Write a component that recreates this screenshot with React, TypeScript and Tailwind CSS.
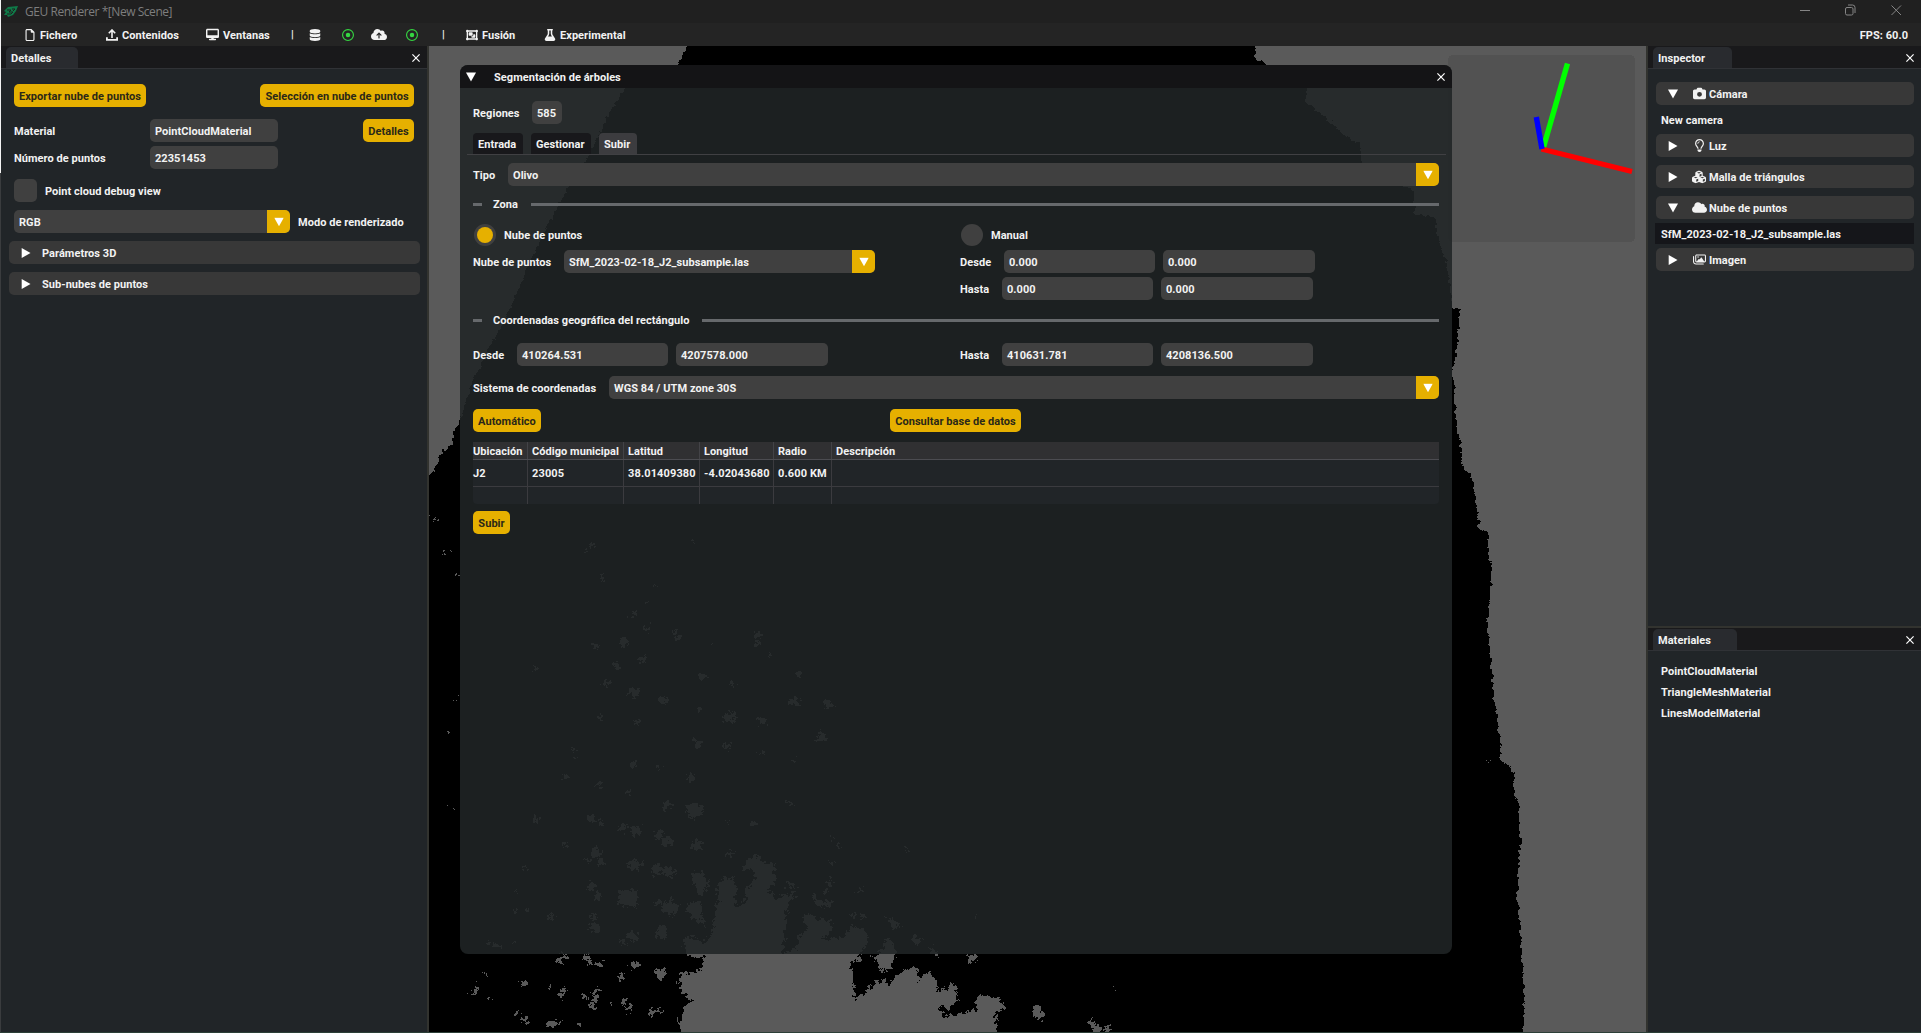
import type { ReactNode } from "react";
import {
  FaCamera,
  FaCloud,
  FaCloudArrowUp,
  FaCubes,
  FaDesktop,
  FaFlask,
  FaObjectGroup,
  FaRegCircleDot,
  FaRegFile,
  FaRegImages,
  FaRegLightbulb,
} from "react-icons/fa6";
import { FaDatabase } from "react-icons/fa";

function Triangle({ open = false, className = "" }: { open?: boolean; className?: string }) {
  return (
    <svg viewBox="0 0 10 10" className={`h-[10px] w-[10px] shrink-0 fill-white ${className}`}>
      <path d={open ? "M0 .5H10L5 9.5Z" : "M.7 0L9.5 5L.7 10Z"} />
    </svg>
  );
}

function Cross() {
  return (
    <svg viewBox="0 0 8 8" className="h-2 w-2 shrink-0 stroke-white" strokeWidth="1.2">
      <path d="M.4 .4L7.6 7.6M7.6 .4L.4 7.6" />
    </svg>
  );
}

function UploadIcon() {
  return (
    <svg viewBox="0 0 12 12" className="h-[12px] w-[12px] fill-none stroke-current">
      <path d="M6 9V1.2M2.8 4.2L6 1L9.2 4.2" strokeWidth="1.6" />
      <path d="M.9 8.2V10.8H11.1V8.2" strokeWidth="1.8" />
    </svg>
  );
}

function Label({ children, className = "" }: { children: ReactNode; className?: string }) {
  return <span className={`shrink-0 pt-[2px] ${className}`}>{children}</span>;
}

function Button({ children, className = "" }: { children: ReactNode; className?: string }) {
  return (
    <button
      className={`flex h-[23px] shrink-0 items-center justify-center rounded-[5px] bg-[#e6b000] pt-[2px] text-[#2b2818] ${className}`}
    >
      {children}
    </button>
  );
}

function Field({ children, className = "" }: { children: ReactNode; className?: string }) {
  return (
    <div className={`flex h-[23px] shrink-0 items-center rounded-[5px] bg-[#404040] pt-[2px] pl-[5px] ${className}`}>
      {children}
    </div>
  );
}

function Combo({ children, className = "" }: { children: ReactNode; className?: string }) {
  return (
    <div
      className={`flex h-[23px] items-center justify-between overflow-hidden rounded-[5px] bg-[#404040] pl-[5px] ${className}`}
    >
      <Label>{children}</Label>
      <span className="flex h-[23px] w-[23px] items-center justify-center bg-[#e6b000]">
        <Triangle open className="scale-95" />
      </span>
    </div>
  );
}

function PanelTab({ title, width }: { title: string; width: string }) {
  return (
    <div className="flex h-[23px] items-end justify-between border-b border-[#303236] bg-[#19191b] pr-[7.5px] pl-[5px]">
      <div className={`flex h-[21px] items-center rounded-t-[5px] bg-[#292b2f] pt-[2px] pl-[5px] ${width}`}>{title}</div>
      <div className="mb-[6px]">
        <Cross />
      </div>
    </div>
  );
}

function Header({ title, icon, open = false }: { title: string; icon?: ReactNode; open?: boolean }) {
  return (
    <div className="flex h-[23px] items-center rounded-[5px] bg-[#383838] pl-[12px]">
      <Triangle open={open} />
      {icon ? <span className="ml-[13px] flex w-[16px] justify-center text-[13px]">{icon}</span> : null}
      <Label className={icon ? "ml-[2px]" : "ml-[11px]"}>{title}</Label>
    </div>
  );
}

function Separator({ title }: { title: string }) {
  return (
    <div className="flex h-[15px] items-center">
      <div className="h-[3px] w-[9px] bg-[#66696c]" />
      <span className="mr-[13px] ml-[11px]">{title}</span>
      <div className="h-[3px] flex-1 bg-[#66696c]" />
    </div>
  );
}

const cloudOutline =
  "M691 40L677 65L623 90L605 122L587 160L567 190L553 215L533 255L520 285L505 320L488 350L472 382L461 418L453 434L453 445L446 448L440 455L437 466L425 481V1040H1524L1524 990L1522 955L1518 900L1518 870L1521 840L1519 833V802L1514 795V771L1500 760L1500 735L1494 700L1489 640L1487 625L1489 610L1492 565L1489 560L1488 533L1480 530L1472 474L1464 470L1455 410L1453 370L1458 340L1460 309L1452 307L1450 285L1446 260L1437 235L1436 218L1415 214L1414 190L1402 186L1382 176L1362 163L1360 142L1344 136L1326 118L1306 102L1307 88L1266 65L1255 58L1256 40Z";

const clearings = [
  "M912 938L930 965L968 978L965 1030L945 1045L965 1078L1000 1062L1030 1048L1010 1085L996 1120L995 1190L985 1242L1028 1225L1035 1190L1055 1165L1045 1130L1065 1118L1085 1138L1120 1140L1125 1170L1100 1200L1150 1195L1190 1155L1215 1165L1230 1200L1210 1235L1203 1242V1265L1180 1270L1185 1320L1190 1378L1225 1350L1240 1335L1270 1315L1285 1340L1310 1300L1340 1285L1365 1290L1370 1320L1390 1295L1418 1320L1420 1355L1445 1350L1460 1330L1475 1345V1390L1450 1408L1425 1395L1440 1430L1525 1412L1526 1380L1540 1366L1593 1375L1615 1405L1584 1418L1593 1500H706L700 1440L712 1405L732 1385L720 1368L700 1355L697 1305L735 1298L760 1290L768 1255L715 1245L708 1190L740 1190L770 1210L788 1185L795 1130L805 1090L802 1050L820 1010L850 1015L860 1050L850 1098L885 1090L880 1055L915 1010L900 990L878 990L880 970Z",
  "M728 992L760 995L778 1020V1050L750 1068L742 1030Z",
  "M712 1110L735 1082L765 1095L762 1120L775 1160L740 1135Z",
  "M525 1048L582 1050L578 1100L535 1098Z",
  "M648 1105L675 1072L695 1100L680 1132Z",
  "M718 805L740 785L772 810L735 842Z",
  "M1072 1065L1095 1082L1125 1085L1120 1104L1080 1100Z",
  "M1236 1250L1260 1240L1270 1212L1288 1195L1308 1240L1285 1290L1265 1297Z",
  "M1272 1130L1295 1140L1322 1160L1300 1165Z",
  "M1348 1182L1378 1198L1362 1215Z",
  "M1397 1215L1415 1225L1428 1252L1408 1245Z",
  "M1078 605L1094 566L1110 602Z",
  "M738 592L767 608L745 632Z",
];

/* x, y, radius of the small gaps between the points */
const gaps: [number, number, number][] = [
  [454, 14, 7], [436, 34, 4], [733, 2, 6], [485, 112, 8], [634, 140, 6], [608, 190, 5], [570, 222, 9], [610, 265, 9],
  [682, 275, 6], [692, 294, 9], [545, 305, 13], [465, 316, 9], [788, 314, 6], [917, 284, 9], [918, 308, 9],
  [597, 356, 12], [520, 375, 9], [292, 385, 5], [760, 408, 12], [495, 430, 11], [572, 457, 14], [652, 482, 12],
  [850, 434, 8], [1020, 485, 14], [1032, 404, 8], [1112, 492, 13], [757, 508, 9], [840, 530, 16], [930, 540, 10],
  [582, 547, 8], [480, 536, 7], [832, 620, 9], [402, 630, 7], [406, 653, 6], [572, 672, 11], [640, 680, 8],
  [378, 712, 8], [730, 713, 11], [474, 735, 8], [552, 758, 6], [664, 796, 13], [298, 840, 8], [450, 835, 10],
  [478, 848, 9], [543, 864, 12], [575, 872, 15], [640, 885, 13], [664, 905, 14], [745, 915, 15], [908, 852, 9],
  [832, 850, 6], [375, 915, 7], [465, 940, 14], [478, 965, 10], [444, 962, 7], [572, 975, 18], [634, 990, 16],
  [668, 995, 17], [268, 983, 6], [450, 1040, 12], [470, 1070, 11], [240, 1056, 4], [240, 1112, 6], [272, 1110, 6],
  [342, 1134, 8], [458, 1132, 8], [462, 1165, 16], [640, 1090, 9], [650, 1178, 18], [568, 1190, 15], [540, 1205, 10],
  [165, 1210, 6], [188, 1215, 7], [234, 1212, 4], [1008, 1035, 8], [1118, 1030, 9], [1110, 1055, 7], [1125, 893, 6],
  [1143, 916, 6], [1126, 967, 6], [1188, 1125, 6], [1214, 1128, 7], [1518, 1255, 13], [1020, 662, 6], [950, 342, 6],
  [925, 637, 6], [1008, 790, 7], [375, 1250, 9], [362, 1262, 8], [440, 1252, 9], [446, 1268, 7], [472, 1275, 9],
  [572, 1275, 12], [540, 1312, 9], [645, 1302, 16], [155, 1305, 5], [130, 1340, 6], [124, 1358, 8], [264, 1330, 8],
  [376, 1350, 9], [366, 1366, 8], [334, 1345, 6], [432, 1370, 7], [466, 1352, 9], [464, 1376, 9], [454, 1398, 9],
  [508, 1388, 6], [545, 1385, 8], [556, 1405, 8], [622, 1415, 10], [642, 1412, 9], [264, 1440, 9], [340, 1452, 10],
  [364, 1448, 6], [245, 1418, 5], [165, 1375, 5], [420, 1458, 5], [40, 40, 4], [56, 32, 3], [54, 580, 4], [82, 464, 4],
  [64, 482, 3], [60, 810, 3], [80, 107, 3], [1698, 1412, 13], [1708, 1428, 11], [1856, 1450, 9], [1868, 1468, 11],
  [1899, 1466, 9], [1915, 1340, 3], [2965, 662, 3], [840, 940, 8], [1335, 930, 5], [12, -60, 4], [-5, -70, 4],
  [1530, 1130, 4], [1205, 1050, 7],
];

function Scene() {
  return (
    <svg viewBox="429 46 1217 986" className="block h-full w-full bg-[#5a5a5a]" shapeRendering="crispEdges">
      <defs>
        <filter id="edge" x="429" y="46" width="1217" height="987" filterUnits="userSpaceOnUse" colorInterpolationFilters="sRGB">
          <feTurbulence type="fractalNoise" baseFrequency="0.2" numOctaves="3" seed="7" />
          <feDisplacementMap in="SourceGraphic" scale="6" xChannelSelector="R" yChannelSelector="G" />
        </filter>
        <filter id="rough" x="429" y="46" width="1217" height="987" filterUnits="userSpaceOnUse" colorInterpolationFilters="sRGB">
          <feTurbulence type="fractalNoise" baseFrequency="0.24" numOctaves="3" seed="4" />
          <feDisplacementMap in="SourceGraphic" scale="12" xChannelSelector="R" yChannelSelector="G" />
        </filter>
      </defs>
      <path d={cloudOutline} fill="#000" filter="url(#edge)" />
      <g filter="url(#rough)">
        <g transform="translate(430 540) scale(.3571 .3333)" fill="#5a5a5a">
          {clearings.map((d) => (
            <path key={d} d={d} />
          ))}
          {gaps.map(([x, y, r]) => (
            <circle key={`${x}-${y}`} cx={x} cy={y} r={r} />
          ))}
        </g>
      </g>
      <rect x="1448" y="55" width="187" height="187" rx="5" fill="#525252" />
      <g strokeWidth="5.4" shapeRendering="auto">
        <path d="M1543 149L1567.5 63.5" stroke="#00ff00" />
        <path d="M1541.5 149L1632 171.5" stroke="#ff0000" />
        <path d="M1542 149L1536.3 117" stroke="#0000ff" />
      </g>
    </svg>
  );
}

const columns = "grid grid-cols-[55px_96px_76px_74px_58px_1fr]";

function SegmentationDialog() {
  return (
    <div className="absolute top-[65px] left-[460px] flex h-[889px] w-[992px] flex-col overflow-hidden rounded-[8px] bg-[#202526]/87">
      <div className="flex h-[23px] shrink-0 items-center bg-[#141416] pr-[7.5px] pl-[6px]">
        <Triangle open />
        <Label className="ml-[18px] flex-1">Segmentación de árboles</Label>
        <Cross />
      </div>
      <div className="flex flex-col pr-[13px] pl-[13px]">
        <div className="mt-[13px] flex items-center">
          <Label className="w-[59px]">Regiones</Label>
          <Field className="w-[30px]">585</Field>
        </div>
        <div className="-mr-[7px] -ml-[6px] mt-[9px] flex h-[22px] gap-[8px] border-b border-[#404043] pl-[6px]">
          <div className="flex w-[50px] items-center rounded-t-[4px] bg-[#18181b] pt-[2px] pl-[5px]">Entrada</div>
          <div className="flex w-[60px] items-center rounded-t-[4px] bg-[#18181b] pt-[2px] pl-[5px]">Gestionar</div>
          <div className="flex w-[38px] items-center rounded-t-[4px] bg-[#3c3c3f] pt-[2px] pl-[5px]">Subir</div>
        </div>
        <div className="mt-[8px] flex items-center">
          <Label className="w-[35px]">Tipo</Label>
          <Combo className="flex-1">Olivo</Combo>
        </div>
        <div className="mt-[11px]">
          <Separator title="Zona" />
        </div>
        <div className="mt-[10px] flex h-[26px] items-center">
          <div className="flex w-[487px] items-center">
            <span className="ml-px flex h-[22px] w-[22px] items-center justify-center rounded-full bg-[#404040]">
              <span className="h-4 w-4 rounded-full bg-[#e6b000]" />
            </span>
            <span className="ml-[8px]">Nube de puntos</span>
          </div>
          <span className="ml-px h-[22px] w-[22px] rounded-full bg-[#404040]" />
          <span className="ml-[8px]">Manual</span>
        </div>
        <div className="mt-[2px] flex items-center">
          <Label className="w-[91px]">Nube de puntos</Label>
          <Combo className="w-[311px]">SfM_2023-02-18_J2_subsample.las</Combo>
          <Label className="ml-[85px] w-[44px]">Desde</Label>
          <Field className="mr-[8px] w-[151px]">0.000</Field>
          <Field className="w-[152px]">0.000</Field>
        </div>
        <div className="mt-[4px] flex items-center pl-[487px]">
          <Label className="w-[42px]">Hasta</Label>
          <Field className="mr-[8px] w-[151px]">0.000</Field>
          <Field className="w-[152px]">0.000</Field>
        </div>
        <div className="mt-[13px]">
          <Separator title="Coordenadas geográfica del rectángulo" />
        </div>
        <div className="mt-[15px] flex items-center">
          <Label className="w-[44px]">Desde</Label>
          <Field className="mr-[8px] w-[151px]">410264.531</Field>
          <Field className="w-[152px]">4207578.000</Field>
          <Label className="ml-[132px] w-[42px]">Hasta</Label>
          <Field className="mr-[8px] w-[151px]">410631.781</Field>
          <Field className="w-[152px]">4208136.500</Field>
        </div>
        <div className="mt-[10px] flex items-center">
          <Label className="w-[136px]">Sistema de coordenadas</Label>
          <Combo className="flex-1">WGS 84 / UTM zone 30S</Combo>
        </div>
        <div className="mt-[10px] flex items-center">
          <Button className="w-[68px]">Automático</Button>
          <Button className="ml-[349px] w-[131px]">Consultar base de datos</Button>
        </div>
        <div className="mt-[10px] h-[62px] rounded-b-[4px] bg-[#212528]">
          <div className={`${columns} h-[18px] border-b border-[#4c4c51] bg-[#303032]`}>
            {["Ubicación", "Código municipal", "Latitud", "Longitud", "Radio", "Descripción"].map((t, i) => (
              <div
                key={t}
                className={`flex items-center pt-[2px] ${i > 0 ? "pl-[4px]" : ""} ${i < 5 ? "border-r border-[#434347]" : ""}`}
              >
                {t}
              </div>
            ))}
          </div>
          <div className={`${columns} h-[27px] border-b border-[#3b3b3f]`}>
            {["J2", "23005", "38.01409380", "-4.02043680", "0.600 KM", ""].map((t, i) => (
              <div
                key={i}
                className={`flex items-center tracking-[0.13px] ${i > 0 ? "pl-[4px]" : ""} ${i < 5 ? "border-r border-[#3b3b3f]" : ""}`}
              >
                {t}
              </div>
            ))}
          </div>
          <div className={`${columns} h-[17px]`}>
            {[0, 1, 2, 3, 4].map((i) => (
              <div key={i} className="border-r border-[#3b3b3f]" />
            ))}
          </div>
        </div>
        <Button className="mt-[7px] w-[37px]">Subir</Button>
      </div>
    </div>
  );
}

function DetailsPanel() {
  return (
    <aside className="flex w-[429px] shrink-0 flex-col border-r-2 border-l border-r-[#32332f] border-l-[#3a3c3e] bg-[#212528]">
      <PanelTab title="Detalles" width="w-[72px]" />
      <div className="flex flex-col px-[8px]">
        <div className="mt-[15px] flex justify-between pr-[5px] pl-[5px]">
          <Button className="w-[132px]">Exportar nube de puntos</Button>
          <Button className="w-[154px]">Selección en nube de puntos</Button>
        </div>
        <div className="mt-[12px] flex items-center pr-[5px] pl-[5px]">
          <Label className="w-[136px]">Material</Label>
          <Field className="w-[128px]">PointCloudMaterial</Field>
          <Button className="ml-auto w-[51px]">Detalles</Button>
        </div>
        <div className="mt-[4px] flex items-center pl-[5px]">
          <Label className="w-[136px]">Número de puntos</Label>
          <Field className="w-[128px]">22351453</Field>
        </div>
        <div className="mt-[10px] flex items-center pl-[5px]">
          <div className="h-[23px] w-[23px] rounded-[5px] bg-[#404040]" />
          <Label className="ml-[8px]">Point cloud debug view</Label>
        </div>
        <div className="mt-[8px] flex items-center pl-[5px]">
          <Combo className="w-[276px]">RGB</Combo>
          <Label className="ml-[8px]">Modo de renderizado</Label>
        </div>
        <div className="mt-[8px] -mr-px flex flex-col gap-[8px]">
          <Header title="Parámetros 3D" />
          <Header title="Sub-nubes de puntos" />
        </div>
      </div>
    </aside>
  );
}

function RightColumn() {
  return (
    <aside className="flex w-[275px] shrink-0 flex-col border-l-2 border-[#32332f] bg-[#212528]">
      <section className="h-[580px]">
        <PanelTab title="Inspector" width="w-[79px]" />
        <div className="mt-[13px] mr-[7px] ml-[8px] flex flex-col">
          <Header open title="Cámara" icon={<FaCamera />} />
          <Label className="flex h-[29px] items-center pl-[5px]">New camera</Label>
          <div className="flex flex-col gap-[8px]">
            <Header title="Luz" icon={<FaRegLightbulb />} />
            <Header title="Malla de triángulos" icon={<FaCubes className="text-[14px]" />} />
            <Header open title="Nube de puntos" icon={<FaCloud className="text-[15px]" />} />
          </div>
          <div className="my-[4px] -ml-px flex h-[21px] items-center bg-[#15161a] pt-[2px] pl-[6px]">
            SfM_2023-02-18_J2_subsample.las
          </div>
          <Header title="Imagen" icon={<FaRegImages />} />
        </div>
      </section>
      <section className="flex-1 border-t-2 border-[#32332f]">
        <PanelTab title="Materiales" width="w-[84px]" />
        <div className="mt-[10px] flex flex-col pl-[13px] leading-[21px]">
          <span>PointCloudMaterial</span>
          <span>TriangleMeshMaterial</span>
          <span>LinesModelMaterial</span>
        </div>
      </section>
    </aside>
  );
}

function MenuItem({ icon, label, className }: { icon: ReactNode; label: string; className: string }) {
  return (
    <span className={`flex shrink-0 items-center gap-[4px] ${className}`}>
      <span className="flex w-[13px] justify-center text-[12px]">{icon}</span>
      <Label>{label}</Label>
    </span>
  );
}

export default function App() {
  return (
    <div className="relative flex h-[1033px] w-[1921px] flex-col overflow-hidden bg-[#212528] font-['Roboto',sans-serif] text-[11px] leading-none font-bold tracking-[0.05px] whitespace-nowrap text-[#f2f2f2]">
      <header className="flex h-[23px] shrink-0 items-center justify-between bg-[#202020]">
        <div className="flex items-center">
          <svg viewBox="0 0 14 11" className="ml-[4px] h-[11px] w-[14px]">
            <path d="M0 5L4 1L14 0L12 5L9 9L4 11L3 9H0L2 6Z" fill="#0f7a48" />
            <path d="M3 4H7L5 6H9L7 8H3M8 3H11L9 5" fill="none" stroke="#202020" strokeWidth="1" />
          </svg>
          <span className="ml-[7px] pt-px font-['Open_Sans',sans-serif] text-[12px] font-normal tracking-[-0.45px] text-[#7e7e7e]">
            GEU Renderer *[New Scene]
          </span>
        </div>
        <svg viewBox="0 0 102 12" className="mr-[19px] mb-[3px] h-[12px] w-[102px] fill-none stroke-[#858585]">
          <path d="M0 6.5H10" />
          <rect x="45.5" y="3.5" width="7.5" height="7.5" rx="1.5" />
          <path d="M48 1H52.5Q55 1 55 3.5V9" />
          <path d="M91.5 1.5L101 11M101 1.5L91.5 11" />
        </svg>
      </header>
      <nav className="flex h-[23px] shrink-0 items-center bg-[#242424]">
        <MenuItem className="ml-[23px] w-[82px]" icon={<FaRegFile />} label="Fichero" />
        <MenuItem className="w-[101px]" icon={<UploadIcon />} label="Contenidos" />
        <MenuItem className="w-[85px]" icon={<FaDesktop className="text-[13px]" />} label="Ventanas" />
        <span className="w-[18px]">|</span>
        <FaDatabase className="h-[12px] w-[12px]" />
        <FaRegCircleDot className="ml-[21px] h-[12px] w-[12px] text-[#35d742]" />
        <FaCloudArrowUp className="ml-[17px] h-[13px] w-[16px]" />
        <FaRegCircleDot className="ml-[19px] h-[12px] w-[12px] text-[#35d742]" />
        <span className="ml-[24px] w-[23px]">|</span>
        <MenuItem className="w-[78px]" icon={<FaObjectGroup />} label="Fusión" />
        <MenuItem className="" icon={<FaFlask />} label="Experimental" />
        <Label className="mr-[13px] ml-auto">FPS: 60.0</Label>
      </nav>
      <main className="flex min-h-0 flex-1">
        <DetailsPanel />
        <div className="min-w-0 flex-1">
          <Scene />
        </div>
        <RightColumn />
      </main>
      <div className="h-px shrink-0 bg-[#2c3f37]" />
      <SegmentationDialog />
      <div className="absolute top-0 left-0 h-[173px] w-px bg-[#f4f4f4]" />
    </div>
  );
}
